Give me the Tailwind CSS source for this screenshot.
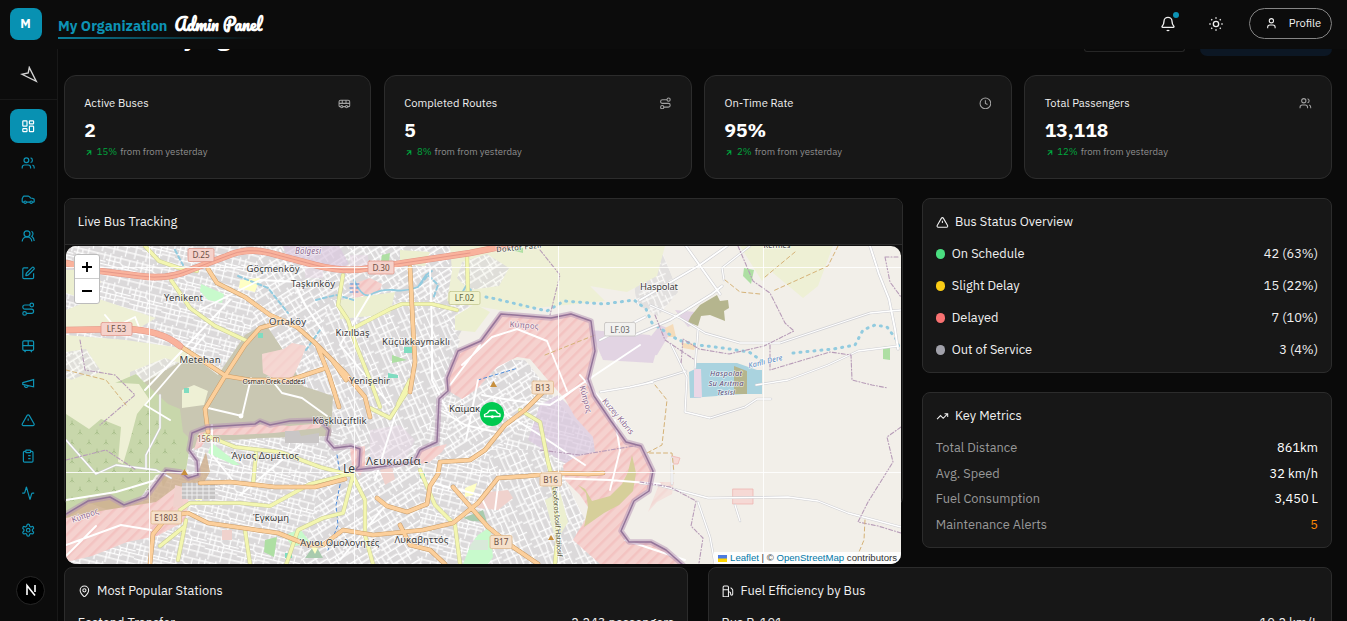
<!DOCTYPE html>
<html lang="en">
<head>
<meta charset="utf-8">
<title>Admin Panel</title>
<script src="https://cdn.jsdelivr.net/npm/@tailwindcss/browser@4"></script>
</head>
<body class="h-[621px] w-[1347px] overflow-hidden bg-[#0a0a0a] font-['IBM_Plex_Sans',Roboto,sans-serif] text-[12.8px] text-[#f0f0f0]">
<svg class="hidden">
  <symbol id="dash" viewBox="0 0 24 24"><rect x="3" y="3" width="7" height="9" rx="1"/><rect x="14" y="3" width="7" height="5" rx="1"/><rect x="14" y="12" width="7" height="9" rx="1"/><rect x="3" y="16" width="7" height="5" rx="1"/></symbol>
  <symbol id="users" viewBox="0 0 24 24"><path d="M16 21v-2a4 4 0 0 0-4-4H6a4 4 0 0 0-4 4v2M22 21v-2a4 4 0 0 0-3-3.87M16 3.13a4 4 0 0 1 0 7.75"/><circle cx="9" cy="7" r="4"/></symbol>
  <symbol id="car" viewBox="0 0 24 24"><path d="M19 17h2c.6 0 1-.4 1-1v-3c0-.9-.7-1.700-1.500-1.900C18.700 10.600 16 10 16 10s-1.300-1.400-2.200-2.300c-.5-.4-1.100-.7-1.800-.7H5c-.6 0-1.100.4-1.400.9l-1.400 2.900A3.700 3.700 0 0 0 2 12v4c0 .6.4 1 1 1h2M9 17h6"/><circle cx="7" cy="17" r="2"/><circle cx="17" cy="17" r="2"/></symbol>
  <symbol id="usersr" viewBox="0 0 24 24"><path d="M18 21a8 8 0 0 0-16 0M22 20c0-3.370-2-6.500-4-8a5 5 0 0 0-.45-8.300"/><circle cx="10" cy="8" r="5"/></symbol>
  <symbol id="pen" viewBox="0 0 24 24"><path d="M12 3H5a2 2 0 0 0-2 2v14a2 2 0 0 0 2 2h14a2 2 0 0 0 2-2v-7M18.375 2.625a1 1 0 0 1 3 3l-9.013 9.014a2 2 0 0 1-.853.505l-2.873.84a.5.5 0 0 1-.62-.62l.84-2.873a2 2 0 0 1 .506-.852z"/></symbol>
  <symbol id="route" viewBox="0 0 24 24"><circle cx="6" cy="19" r="3"/><path d="M9 19h8.500a3.500 3.500 0 0 0 0-7h-11a3.500 3.500 0 0 1 0-7H15"/><circle cx="18" cy="5" r="3"/></symbol>
  <symbol id="tram" viewBox="0 0 24 24"><rect x="3" y="3" width="18" height="16" rx="2"/><path d="M3 11h18M12 3v8M8 19l-2 3M16 19l2 3M8 15h.01M16 15h.01"/></symbol>
  <symbol id="mega" viewBox="0 0 24 24"><path d="m3 11 18-5v12L3 14v-3zM11.600 16.800a3 3 0 1 1-5.800-1.600"/></symbol>
  <symbol id="alert" viewBox="0 0 24 24"><path d="m21.730 18-8-14a2 2 0 0 0-3.480 0l-8 14A2 2 0 0 0 4 21h16a2 2 0 0 0 1.730-3M12 9v4M12 17h.01"/></symbol>
  <symbol id="clip" viewBox="0 0 24 24"><rect x="8" y="2" width="8" height="4" rx="1"/><path d="M16 4h2a2 2 0 0 1 2 2v14a2 2 0 0 1-2 2H6a2 2 0 0 1-2-2V6a2 2 0 0 1 2-2h2M12 11h4M12 16h4M8 11h.01M8 16h.01"/></symbol>
  <symbol id="act" viewBox="0 0 24 24"><path d="M22 12h-2.480a2 2 0 0 0-1.930 1.460l-2.350 8.360a.25.25 0 0 1-.48 0L9.240 2.180a.25.25 0 0 0-.48 0l-2.350 8.360A2 2 0 0 1 4.490 12H2"/></symbol>
  <symbol id="gear" viewBox="0 0 24 24"><path d="M12.220 2h-.44a2 2 0 0 0-2 2v.18a2 2 0 0 1-1 1.730l-.43.25a2 2 0 0 1-2 0l-.15-.08a2 2 0 0 0-2.730.73l-.22.38a2 2 0 0 0 .73 2.730l.15.1a2 2 0 0 1 1 1.720v.51a2 2 0 0 1-1 1.740l-.15.09a2 2 0 0 0-.73 2.730l.22.38a2 2 0 0 0 2.730.73l.15-.08a2 2 0 0 1 2 0l.43.25a2 2 0 0 1 1 1.730V20a2 2 0 0 0 2 2h.44a2 2 0 0 0 2-2v-.18a2 2 0 0 1 1-1.730l.43-.25a2 2 0 0 1 2 0l.15.08a2 2 0 0 0 2.730-.73l.22-.39a2 2 0 0 0-.73-2.730l-.15-.08a2 2 0 0 1-1-1.740v-.5a2 2 0 0 1 1-1.740l.15-.09a2 2 0 0 0 .73-2.730l-.22-.38a2 2 0 0 0-2.730-.73l-.15.08a2 2 0 0 1-2 0l-.43-.25a2 2 0 0 1-1-1.730V4a2 2 0 0 0-2-2z"/><circle cx="12" cy="12" r="3"/></symbol>
  <symbol id="bus" viewBox="0 0 24 24"><path d="M8 6v6M15 6v6M2 12h20M18 18h2.500a1.500 1.500 0 0 0 1.500-1.500V9a3 3 0 0 0-3-3H5a3 3 0 0 0-3 3v7.500A1.500 1.500 0 0 0 3.500 18H5M9 18h5"/><circle cx="7" cy="18" r="2"/><circle cx="16" cy="18" r="2"/></symbol>
  <symbol id="clock" viewBox="0 0 24 24"><circle cx="12" cy="12" r="10"/><path d="M12 6v6l4 2"/></symbol>
  <symbol id="bell" viewBox="0 0 24 24"><path d="M10.300 21a1.940 1.940 0 0 0 3.400 0M3.260 15.330A1 1 0 0 0 4 17h16a1 1 0 0 0 .74-1.670C19.410 13.960 18 12.500 18 8A6 6 0 0 0 6 8c0 4.500-1.410 5.960-2.740 7.330"/></symbol>
  <symbol id="sun" viewBox="0 0 24 24"><circle cx="12" cy="12" r="4"/><path d="M12 2v2M12 20v2M4.930 4.930l1.410 1.410M17.660 17.660l1.410 1.410M2 12h2M20 12h2M6.340 17.660l-1.410 1.410M19.070 4.930l-1.410 1.410"/></symbol>
  <symbol id="user" viewBox="0 0 24 24"><path d="M19 21v-2a4 4 0 0 0-4-4H9a4 4 0 0 0-4 4v2"/><circle cx="12" cy="7" r="4"/></symbol>
  <symbol id="up" viewBox="0 0 24 24"><path d="M7 7h10v10M7 17 17 7"/></symbol>
  <symbol id="trend" viewBox="0 0 24 24"><path d="m22 7-8.500 8.500-5-5L2 17M16 7h6v6"/></symbol>
  <symbol id="pin" viewBox="0 0 24 24"><path d="M20 10c0 4.990-5.540 10.190-7.400 11.800a1 1 0 0 1-1.200 0C9.540 20.190 4 14.990 4 10a8 8 0 0 1 16 0"/><circle cx="12" cy="10" r="3"/></symbol>
  <symbol id="fuel" viewBox="0 0 24 24"><path d="M3 22h12M4 9h10M14 22V4a2 2 0 0 0-2-2H6a2 2 0 0 0-2 2v18M14 13h2a2 2 0 0 1 2 2v2a2 2 0 0 0 4 0V9.830a2 2 0 0 0-.59-1.420L18 5"/></symbol>
</svg>

<div class="flex h-full">
  <aside class="flex w-[58px] shrink-0 flex-col border-r border-[#191919] bg-[#0c0c0c] fill-none stroke-[#0d93b5] stroke-2">
    <div class="flex h-[100px] flex-col border-b border-[#191919]">
      <div class="mt-2 ml-[10px] flex size-8 items-center justify-center rounded-lg bg-[#0891b2] pr-px text-[12.8px] font-bold text-white">M</div>
      <svg class="mt-[26px] ml-5 size-[18px] stroke-[#d4d4d4] stroke-[1.4]" viewBox="0 0 18 18"><path d="M9.300 1.500 16.200 15.300 2 8.300 8.200 7z"/></svg>
    </div>
    <nav class="ml-[10px] flex w-[37px] flex-col gap-[2.730px] pt-[9px]">
      <div class="flex h-[34px] items-center justify-center rounded-lg bg-[#0891b2] stroke-white pr-px"><svg class="size-[14.400px]"><use href="#dash"/></svg></div>
      <div class="flex h-[34px] items-center justify-center pr-px"><svg class="size-[14.400px]"><use href="#users"/></svg></div>
      <div class="flex h-[34px] items-center justify-center pr-px"><svg class="size-[14.400px]"><use href="#car"/></svg></div>
      <div class="flex h-[34px] items-center justify-center pr-px"><svg class="size-[14.400px]"><use href="#usersr"/></svg></div>
      <div class="flex h-[34px] items-center justify-center pr-px"><svg class="size-[14.400px]"><use href="#pen"/></svg></div>
      <div class="flex h-[34px] items-center justify-center pr-px"><svg class="size-[14.400px]"><use href="#route"/></svg></div>
      <div class="flex h-[34px] items-center justify-center pr-px"><svg class="size-[14.400px]"><use href="#tram"/></svg></div>
      <div class="flex h-[34px] items-center justify-center pr-px"><svg class="size-[14.400px]"><use href="#mega"/></svg></div>
      <div class="flex h-[34px] items-center justify-center pr-px"><svg class="size-[14.400px]"><use href="#alert"/></svg></div>
      <div class="flex h-[34px] items-center justify-center pr-px"><svg class="size-[14.400px]"><use href="#clip"/></svg></div>
      <div class="flex h-[34px] items-center justify-center pr-px"><svg class="size-[14.400px]"><use href="#act"/></svg></div>
      <div class="flex h-[34px] items-center justify-center pr-px"><svg class="size-[14.400px]"><use href="#gear"/></svg></div>
    </nav>
    <div class="mt-[29px] ml-[16px] flex size-[29px] items-center justify-center rounded-full border border-[#272727] bg-black">
      <svg class="size-[14px] stroke-white stroke-[1.600]" viewBox="0 0 14 14"><path d="M3 12V2.500l8 10M11 2v7"/></svg>
    </div>
  </aside>

  <div class="flex min-w-0 flex-1 flex-col">
    <header class="-ml-px flex h-[49px] shrink-0 justify-between bg-[#0c0c0c] pr-[15px]">
      <div class="mt-[11px] ml-px h-[28px] w-[250px]">
        <div class="flex h-[26px] items-center gap-[7px] whitespace-nowrap">
          <span class="mt-1 text-[14.400px] font-bold text-[#0d93b5]">My Organization</span>
          <span class="text-[16px] leading-[26px] font-bold text-white font-['Pacifico','Lobster','Liberation_Serif',serif]">Admin Panel</span>
        </div>
        <div class="h-[2px] w-[200px] bg-gradient-to-r from-[#0b7e9b] to-transparent"></div>
      </div>
      <div class="flex fill-none stroke-[#f0f0f0] stroke-2">
        <div class="relative mt-4 mr-[32px] size-4"><svg class="size-4"><use href="#bell"/></svg><i class="absolute -top-1 left-[13px] size-[6px] rounded-full bg-[#0d93b5]"></i></div>
        <svg class="mt-4 mr-[25px] size-4"><use href="#sun"/></svg>
        <div class="mt-2 flex h-[31px] w-[83px] items-center rounded-full border border-[#858585] pl-[15px] text-[11.200px]"><svg class="mr-[11px] size-[12.800px]"><use href="#user"/></svg>Profile</div>
      </div>
    </header>

    <main class="flex flex-1 flex-col pr-[15.200px] pl-[6px]">
      <div class="flex h-[26px] items-start justify-between overflow-hidden">
        <div class="-mt-[21px] ml-[119px] flex h-[26px] gap-[22px] text-[23px] leading-[20px] font-bold text-white"><span>y</span><span>g</span></div>
        <div class="flex gap-[15px]">
          <div class="h-[3px] w-[101px] rounded-b-lg border border-t-0 border-[#262626]"></div>
          <div class="h-[7px] w-[132px] rounded-b-lg bg-[#0c1724]"></div>
        </div>
      </div>

      <section class="grid h-[104px] grid-cols-4 gap-[12.800px]">
        <div class="rounded-xl border border-[#2c2c2c] bg-[#171717] px-[19.200px] pt-[18px]">
          <div class="flex h-[18px] items-center justify-between text-[11.200px]"><span>Active Buses</span><svg class="size-[12.800px] fill-none stroke-[#a1a1a1] stroke-2"><use href="#bus"/></svg></div>
          <div class="mt-[5px] text-[19.200px] leading-[26px] font-bold text-white">2</div>
          <div class="mt-[3px] flex h-[13px] items-center text-[9.600px] text-[#8d8d8d]"><svg class="mr-[3px] size-[9.600px] fill-none stroke-[#00a63e] stroke-[2.600]"><use href="#up"/></svg><span class="mr-[3px] text-[#00a63e]">15%</span>from from yesterday</div>
        </div>
        <div class="rounded-xl border border-[#2c2c2c] bg-[#171717] px-[19.200px] pt-[18px]">
          <div class="flex h-[18px] items-center justify-between text-[11.200px]"><span>Completed Routes</span><svg class="size-[12.800px] fill-none stroke-[#a1a1a1] stroke-2"><use href="#route"/></svg></div>
          <div class="mt-[5px] text-[19.200px] leading-[26px] font-bold text-white">5</div>
          <div class="mt-[3px] flex h-[13px] items-center text-[9.600px] text-[#8d8d8d]"><svg class="mr-[3px] size-[9.600px] fill-none stroke-[#00a63e] stroke-[2.600]"><use href="#up"/></svg><span class="mr-[3px] text-[#00a63e]">8%</span>from from yesterday</div>
        </div>
        <div class="rounded-xl border border-[#2c2c2c] bg-[#171717] px-[19.200px] pt-[18px]">
          <div class="flex h-[18px] items-center justify-between text-[11.200px]"><span>On-Time Rate</span><svg class="size-[12.800px] fill-none stroke-[#a1a1a1] stroke-2"><use href="#clock"/></svg></div>
          <div class="mt-[5px] text-[19.200px] leading-[26px] font-bold text-white">95%</div>
          <div class="mt-[3px] flex h-[13px] items-center text-[9.600px] text-[#8d8d8d]"><svg class="mr-[3px] size-[9.600px] fill-none stroke-[#00a63e] stroke-[2.600]"><use href="#up"/></svg><span class="mr-[3px] text-[#00a63e]">2%</span>from from yesterday</div>
        </div>
        <div class="rounded-xl border border-[#2c2c2c] bg-[#171717] px-[19.200px] pt-[18px]">
          <div class="flex h-[18px] items-center justify-between text-[11.200px]"><span>Total Passengers</span><svg class="size-[12.800px] fill-none stroke-[#a1a1a1] stroke-2"><use href="#users"/></svg></div>
          <div class="mt-[5px] text-[19.200px] leading-[26px] font-bold text-white">13,118</div>
          <div class="mt-[3px] flex h-[13px] items-center text-[9.600px] text-[#8d8d8d]"><svg class="mr-[3px] size-[9.600px] fill-none stroke-[#00a63e] stroke-[2.600]"><use href="#up"/></svg><span class="mr-[3px] text-[#00a63e]">12%</span>from from yesterday</div>
        </div>
      </section>

      <section class="mt-[19px] flex h-[350px] gap-[19px]">
        <div class="h-[308px] w-[839px] shrink-0 rounded-lg border border-[#2c2c2c] bg-[#101010]">
          <div class="flex h-[46px] items-center rounded-t-lg border-b border-[#2c2c2c] bg-[#171717] px-[12.800px]">Live Bus Tracking</div>
          <div class="relative z-10 mt-px ml-px h-[318px] w-[835px] overflow-hidden rounded-[10px]">
            <svg class="block h-[318px] w-[835px]" viewBox="66 246 835 318" fill="none" stroke-linejoin="round" stroke-linecap="round">
              <defs>
                <pattern id="st1" width="46" height="38" patternUnits="userSpaceOnUse" patternTransform="rotate(14) scale(.72)"><path fill="#dbd9da" d="M0 0h46v38H0z"/><path stroke="#fff" stroke-width="1.700" d="M0 4h46M0 10h20l4 3h22M0 17h46M0 24h28M28 22h18M0 31h46M5 0v17M12 4v27M20 0v10M25 13v25M33 4v13M38 17v21M43 0v10M8 24v14M18 17v7"/></pattern>
                <pattern id="st2" width="42" height="44" patternUnits="userSpaceOnUse" patternTransform="rotate(-32) scale(.75)"><path fill="#dbd9da" d="M0 0h42v44H0z"/><path stroke="#fff" stroke-width="1.700" d="M0 5h42M0 12h25M25 10h17M0 19h42M0 27h15l5 3h22M0 36h42M4 5v31M11 0v19M18 19v25M24 5v14M31 12v24M37 0v12M9 36v8M27 30v14M38 19v17"/></pattern>
                <pattern id="st3" width="50" height="46" patternUnits="userSpaceOnUse" patternTransform="rotate(66) scale(.72)"><path fill="#dbd9da" d="M0 0h50v46H0z"/><path stroke="#fff" stroke-width="1.800" d="M0 6h50M0 13h30M30 16h20M0 22h50M0 29q25 5 50 0M0 38h50M7 0v22M15 13v25M23 0v13M30 6v24M40 0v29M46 22v24M10 29v17M35 31v15"/></pattern>
                <pattern id="red" width="8" height="8" patternUnits="userSpaceOnUse" patternTransform="rotate(45)"><path fill="#f5d2cf" d="M0 0h8v8H0z"/><path fill="#f3c3c1" d="M0 0h2.500v8H0z"/></pattern>
                <pattern id="tree" width="17" height="19" patternUnits="userSpaceOnUse"><path stroke="#a6bc88" stroke-width=".8" d="M4 7v-4M2 7l2-2 2 2M12 16v-4M10 16l2-2 2 2"/></pattern>
              </defs>
              <path fill="#f2efe9" d="M66 246h835v318H66z"/>
              <!-- districts -->
              <path fill="url(#st1)" d="M66 246h210l20 60-40 70-80-20-110-15z"/>
              <path fill="url(#st2)" d="M260 246h200l10 70-40 70-2 70-98-5-30-60-50-50z"/>
              <path fill="url(#st3)" d="M330 300h100l30 40-20 60-20 55-90-20-25-50z"/>
              <path fill="url(#st1)" d="M190 432h150l20 50v82H66l50-60 70-30z"/>
              <path fill="url(#st2)" d="M330 445h120l20 119H300z"/>
              <path fill="url(#st1)" d="M440 400l40-40 45 0 40 50 35 40-45 30 20 84H420V450z"/>
              <path fill="url(#st3)" d="M490 450l60 0 25 50 10 64H480zM575 500l25 50 60 14h-80z"/>
              <path fill="url(#st2)" d="M460 385l40-30 30 10 10 50-70 50-30-10z"/>
              <path fill="url(#st3)" d="M632 252l28-6 18 46-20 24-22-12z" opacity=".7"/>
              <!-- farmland, scrub and woods -->
              <path fill="#eef0d5" d="M66 335l60 5 55 8 35 32-15 40-70 20-65-20zM450 246h145l-10 35 20 20-100 10-58-10 5-30zM570 246h95l-8 30-30 16-75-12zM770 246h63l-15 40-15 12-30-25zM740 246h40l-3 20-15 15zM66 310l30-12 60 20-20 12-70-3z"/>
              <path fill="#ecefd0" d="M66 270l25 0 10 12-20 16-15-5zM340 300l55-8-5 22-50 5zM455 316l20-12 15 8-15 20-20-2zM545 500l15-8 8 30-12 20zM400 250l30 2-5 14-25-2z"/>
              <path fill="url(#st2)" d="M66 352l20-3 15 22-20 12-15-5zM130 372l35-14 18 6-28 27-25-5zM462 262l25-8 22 14-10 18-30 4-12-12z" opacity=".8"/>
              <path fill="#c9c7b2" d="M140 385l38-22 20-3 20 15 27-40 20-12 18 27 20 36 30 10-2 40-68 2-60 4-23 15-17 30-10-50z"/>
              <path fill="#c8d7ab" d="M66 385l20-6 15 10 35-15 10 10 22 20 12 5 3 23 8 8-5 30-30 5-15 22-24 16-28-10-23 16z"/>
              <path fill="url(#tree)" d="M66 410h90l25 30-2 30-30 20-83 15z"/>
              <path fill="#eef0d5" d="M66 382l20-8 18 8 35 2 10 15-12 15-8 30-6 20-5-2 3-35-20-8-12 10-23-15zM182 390l12-5 14 6-4 14-22 3z"/>
              <path fill="#cfb08f" d="M66 515l22-14 22-3 14 8 22-9 18-26 22 4 10 2 10-25 4 20-14 24-35 8-35 20-60 6z" opacity=".85"/>
              <path fill="#f5d9d4" d="M262 354l22-5 8-6 14 3-5 14-12 25-18-8-8-4z"/><path fill="url(#red)" opacity=".35" d="M262 354l22-5 8-6 14 3-5 14-12 25-18-8-8-4z"/>
              <path fill="url(#red)" d="M66 518l40-8 50-8 20-15 14 4-5 30-28 15-30 6-35 14-26 6z"/>
              <path fill="url(#red)" d="M194 450l5-17 25-6 45-3 20 2 35-3-5 5-45 5-40 2-25 0-8 12z"/>
              <path fill="url(#red)" d="M350 448l15-2 0 20-5 10-8-10zM412 462l10-12 25-6-5 8-15 12zM350 285l20-7 12 6-3 8-25 6z"/>
              <path fill="#c8facc" d="M201 284l23 10-2 9-14-3-8-9zM212 443l28 22-6 0-26-12zM478 535l12-8 3 30-5 7h-25l8-20zM285 535l15-6 10 13-18 5zM455 375h15v8h-13z"/>
              <path fill="#aedfa3" d="M265 540l12-3-3 20-10-5zM382 255l8-2-1 8h-8zM744 268l10 2-3 14-8-8zM511 250l12-2v5zM883 347l7-1 0 14-7-1zM392 355l15 5-15 3z"/>
              <path fill="#7fdcc0" d="M258 333h5v5h-5zM404 347h8v6h-8zM388 373l10 2v3h-10zM184 388h5v5h-5zM285 553h7v5h-7zM310 436h5v4h-5zM420 474h5v4h-5z"/>
              <path fill="#a9cbae" d="M463 518l20-8 4 12-15-1zM305 558l10-14 8 14z"/>
              <path fill="#dcc9e0" opacity=".7" d="M283 246h56l10 18-12 5-50-12zM590 330l60 5 8 10-5 18-50-3zM540 405l18-10 40 40-5 20-25 10-40-25zM600 355l40-5 20-25 12 5-15 25-45 5zM675 310l20 2 3 10-10 5zM690 378l8-2 3 22h-9z"/>
              <path fill="#ffffc5" d="M240 280l20-2-5 14-16-4zM465 488l12-5-4 12-8 2zM310 545l8 3-3 6zM195 495h7v5h-7z"/>
              <path fill="#e8d8e6" d="M305 264h18v14h-18zM350 255h18v15h-18zM470 540h18v10h-18zM370 430l30-5 15 15-10 20-35 2z" opacity=".5"/>
              <path fill="#f0d2cd" d="M380 470l12-3 3 12-10 6zM478 502l10-10 20-2 5 8-15 12-20-2zM222 530h10v10h-10zM175 485l8 2 0 18-10 3z"/>
              <path fill="#f5dcba" d="M665 328l8-4 3 13-8 0zM681 343l15 1-2 6-11-2z"/>
              <path fill="#b5b58e" d="M700 305l17-10 3 6 8-1 1 8-5 3 1 10-15-6-9 1-3 10-10-4 3-6z"/>
              <path fill="#f6d9d5" stroke="#eeb0ae" stroke-width=".7" d="M733 489h20v15h-20zM672 456l8 2-2 6-5 0z"/>
              <path fill="#c9c6c6" d="M285 431h14l2 5 18-3v10h-34z"/>
              <path fill="#c5c3c3" d="M182 483h33v16h-33z"/><path stroke="#eee" d="M182 487h33M182 491h33M182 495h33M187 483v16M192 483v16M197 483v16M203 483v16M209 483v16"/>
              <!-- buffer zone -->
              <path fill="url(#red)" d="M447 390l-1-13 11-27 23-10 20-27 50 4 20-4 20 7 4 30-7 28 6 17 17 25 15 21 15 4 12 25-4 20-15 10-13 30 8 11 22 0 15 8 17 15H600l-27-24 12-20 5-10-10-15-15-15-2-15 12-8 20-5-2-15-18-20-10-18-18-20-17-20-13-2-20 10-20 22-15 10z"/>
              <path fill="url(#red)" opacity=".5" d="M660 482l14 0-2 12-15 8-9 10z"/>
              <path fill="#d6cf9a" d="M632 455l4 18-3 18-14 14-15 8-20 14 4-20-2-14-8-8 7 4 7 12 18-5 12-12 6-12z"/>
              <!-- streams -->
              <path stroke="#92cbdf" stroke-width="1.800" d="M354 280q8 18 16 15 10-6 24-5 12 2 24-3l8-12 6-4M458 300l8-14 5 4-4 8"/>
              <path stroke="#92cbdf" stroke-width="2" stroke-dasharray="4 3" d="M316 300l20-5 18 5M420 285l8-10 10 10-5 14M175 250l8 15M238 276l30 12 20 25M320 330l-14 20"/>
              <path stroke="#92cbdf" stroke-width="3" stroke-dasharray="1 6" d="M486 297l10 2 25 6 26 6 17-10 40 3 30-4 12 9 6 14 26 17 20 5 25 3 26 4 13 9M793 353l40-4 22-4 8-15 12-5 12 2 9 12 3 8"/>
              <path stroke="#4b8ad9" stroke-dasharray="3 3" d="M350 284h9M350 288h8M350 292h8M337 455l4 25-5 25 2 20-10 25M478 380l40-12"/>
              <path fill="#aad3df" d="M695 363l42 0 20 7h5v24h-18l-54 4-1-26 6-3z"/><path fill="#b5b58e" d="M734 366l13 5v23h-13z"/><path fill="#ead7e6" d="M694 369l7 0 1 28h-8z"/>
              <!-- minor roads -->
              <g stroke="#cfcfd3" stroke-width="3"><path id="mr" d="M635 335l35-15 42-26 10-8M686 246l34 48M640 300l60-35 27-19M600 340l45-23M870 246l9 28 10 25 6 30 3 20"/></g>
              <g stroke="#cfcfd3" stroke-width="2.400"><path id="mq" d="M750 246l-28 22 2 12M650 305l30 13 25 15 35 10 40 0 30-10 60-20 31-3M898 346l-40 5-30 14-40 15-32 5M698 330l-3 38M671 344l16 33-2 35 25 6 35-11 12-8h14M640 385l30-9 16-5M600 392l30-5 23-5M640 483l18 2 50 13 80-1 30 4 30 12 53 14M698 502l12 35 5 27M735 505l5 16M672 458v26M66 440l30 34 20-9 40 5 15 8M160 395v33l-14 27v14"/></g>
              <use href="#mq" stroke="#fff" stroke-width="1.300"/>
              <g stroke="#fff" stroke-width="1.900"><use href="#mr"/><path d="M208 408l34 8 9-38M270 378l12 15 20 5 25 18M212 425v30l23 28M105 315l10 12 20-10 8 20M205 335l-60 70 25 15M230 300l-85 90M200 310l60-30 40 2M280 250l25 55 20 30M370 295l-30 50 50 60M430 270l2 60 0 50 15 30M480 345l-30 40M478 380l-12 60M500 410l40 25 45 30M640 345l-60 40-30 20-40-5-28-5M440 410l25 15 35 8M550 478l60 2 50 4M610 410l-30-35M615 420l5 30-10 40M66 500l50-8 40-12M66 545l55-20 30 5M66 556l30-30M300 445l-60 50M390 500l-50 60M400 400l-25 80M420 480l60 15 10 20M500 470l-5 40M625 540l60 20M462 365l30-28 25-8 30 12 8 20 12 30M560 400l20-15"/><circle cx="241" cy="416" r="1.500" fill="#fff"/></g>
              <g stroke="#b79cb8" stroke-width="1.100" stroke-dasharray="4 2 1 2"><path d="M738 246l15 35 17 12 15 30 9 8-30 15-35 8-30-5-16-10-2 25M655 315l10 25 30 20M770 345v25l60-18 21 3 1 25 20 5 16 3M901 427l-14 10 6 25-25 40-10 20 20 4 23 7M640 482l30 5 26 14-5 25 12 12-4 25M885 257h15M885 257l5 25 11 15M66 460l40-10 30 20M80 340l5 30 30 5 20 20-35 30M540 250l20 25-10 40M540 450l40 5 60-10"/></g>
              <g stroke="#d5b277" stroke-dasharray="4 3"><path d="M655 385l12 15-5 45-15 8 25 0 2 20M795 252l-30 25M838 246l-10 20-55 25M725 280l15 12 20 2M66 370l40 10 20 25M545 355l50-20M865 520l-1 20-10 24"/></g>
              <!-- secondary roads -->
              <g stroke="#c9cb98" stroke-width="4.200"><path id="yr" d="M145 246l14 15 20 7 18 3M171 280l19 28 25 18 32 15M343 275l-5 30 10 15 8 25 16 40 8 22M350 330l40-21 12-5h30l25 6M467 256l1 40M205 435l30 12 45 5 40 15 30 8M256 453l-3 32M180 510l10-7 50 0 30 3 40-22 40-10M355 468l-12 45-20 5-25 12-12 35M520 410l20 12 8 40 5 20 5 50-3 32M160 546l25-20M178 560l8-40M245 530l5 34M350 470l15 30 0 35 8 29M420 470l15 35 20 20 5 39M370 408l20 10 18-28M410 380l-12 24"/></g>
              <use href="#yr" stroke="#f3f6b0" stroke-width="3.200"/>
              <g stroke="#c99b66" stroke-width="4.600"><path id="or" d="M208 269l9 14 28 14 25 18 27 12 17 15 18 18 14 20M180 346l46 30 24 4 40 0 33-11M225 376l20-31 15-17 25-7M225 376l-20 33 3 23M410 267l3 60 2 35-5 30M317 345l12 30 10 32M315 343l30 30 20 24 5 20M200 483l30-1 45 5 40 0 30-8M150 564l3-30 15-18 20-3 20 10 35 5 35 5 30 12h15l20-15 30 5 50-5 30-7 25-20 20-25 30-2 30-3 30 1 15-1M440 462l30-2 15-10 20-25 20-15 20-20M440 462l-2 12-8 12-3 18-20 8-20-6-10-8M453 487l35 40 25 20 25 17M400 525l10 20 20 5 15 14"/></g>
              <use href="#or" stroke="#fccf9b" stroke-width="3.600"/>
              <g stroke="#e29687" stroke-width="6.600"><path id="tr" d="M66 263l34 8 40 5q28 4 50-6l37-14q20-9 43-3l45 12q30 8 55 3l100-15 50-10M66 330l60-1q35 1 54 17"/></g>
              <use href="#tr" stroke="#f9b29c" stroke-width="5.600"/>
              <path stroke="#d9877c" stroke-width=".6" d="M100 271l40 5q28 4 50-6l37-14q20-9 43-3l45 12q30 8 55 3l100-15"/>
              <!-- border -->
              <g stroke="#b898b6" stroke-opacity=".55" stroke-width="5.500"><path id="bd" d="M66 514l22-13 22-4 14 8 22-8 20-27 15 2 7 6 10-3-1-14-8-11 3-17 15-6 48-3 5-3 10 4 20-4 30-1 9 10-2 10 7 8 17-2 9 3-1 17-4 4 17-2 42-6 6-12 17-8 2-43 9-8-1-13 11-27 23-10 20-27 50 4 20-4 20 7 4 30-7 28 6 17 17 25 15 21 15 4 12 25-4 20-15 10-13 30 8 11 22 0 15 8 17 15"/></g>
              <use href="#bd" stroke="#94759a" stroke-width="1.500"/>
              <!-- tile seams -->
              <path stroke="#fff" stroke-opacity=".85" d="M149.500 246v318M354.500 246v318M558.500 246v318M763.500 246v318M66 267.500h835M66 472.500h835"/>
              <path fill="#c78f3d" d="M181 475l3.500-6 3.500 6zM490 387l3.500-6 3.500 6zM548 540l3-5 3 5z"/>
              <!-- road shields -->
              <g stroke-width=".8"><g fill="#f5d2cb" stroke="#e2988c"><rect x="188" y="248.500" width="26" height="13" rx="1.500"/><rect x="368" y="261" width="26" height="13" rx="1.500"/><rect x="101" y="322.500" width="31" height="13" rx="1.500"/></g><rect x="449" y="291.500" width="31" height="13" rx="1.500" fill="#f0f3cf" stroke="#c4c890"/><rect x="604.500" y="322.500" width="31" height="13.500" rx="1.500" fill="#f2f1ef" stroke="#c5c3c0"/><g fill="#f6e0ca" stroke="#dfb98e"><rect x="532" y="381" width="21.500" height="13" rx="1.500"/><rect x="540" y="473" width="21.500" height="13" rx="1.500"/><rect x="490" y="535.500" width="22" height="13" rx="1.500"/><rect x="151" y="511" width="30.500" height="13" rx="1.500"/></g></g>
              <g class="font-['Noto_Sans']" font-size="8.200" text-anchor="middle" fill="#6c4f43"><text x="201" y="258">D.25</text><text x="381" y="270.500">D.30</text><text x="116.500" y="332">LF.53</text><text x="464.500" y="301" fill="#60653d">LF.02</text><text x="620" y="332.500" fill="#666">LF.03</text><text x="542.500" y="390.500">B13</text><text x="550.500" y="482.500">B16</text><text x="501" y="545">B17</text><text x="166" y="520.500">E1803</text></g>
              <!-- place names -->
              <g class="font-['Noto_Sans']" font-size="9.500" text-anchor="middle" fill="#3b3b3b" stroke="#fff" stroke-opacity=".6" stroke-width="1.600" paint-order="stroke">
                <text x="273" y="272" textLength="53">Göçmenköy</text><text x="313" y="287" textLength="44">Taşkınköy</text><text x="183.500" y="300.500" textLength="39">Yenikent</text><text x="287.500" y="325" textLength="37">Ortaköy</text><text x="352.500" y="335.500" textLength="34">Kızılbaş</text><text x="416" y="345" textLength="68">Küçükkaymaklı</text><text x="369.500" y="384" textLength="41">Yenişehir</text><text x="200" y="362.500" textLength="41">Metehan</text><text x="339.500" y="423.500" textLength="54">Köşklüçiftlik</text><text x="659" y="290" textLength="38">Haspolat</text><text x="464.500" y="412" textLength="31">Καϊμακ</text><text x="265" y="459" textLength="68">Άγιος Δομέτιος</text><text x="271" y="521" textLength="36">Έγκωμη</text><text x="339.500" y="546" textLength="80">Άγιοι Ομολογητές</text><text x="421.500" y="543" textLength="54">Λυκαβηττός</text>
                <text x="397" y="465" font-size="11.500" textLength="62">Λευκωσία -</text><text x="349" y="472.500" font-size="12" textLength="12">Le</text>
                <text x="208.500" y="442" font-size="8" fill="#8b6750" textLength="23">156 m</text>
                <text x="274" y="384" font-size="7" fill="#2d251b" textLength="63">Osman Örek Caddesi</text>
                <text x="519" y="250" font-size="7.500" transform="rotate(-6 519 250)" textLength="45">Doktor Fazıl</text><text x="777" y="248" font-size="7.500">Kermes</text>
                <g fill="#8d6a92" font-size="8"><text x="308" y="254" font-style="italic" textLength="26">Bölgesi</text><text x="524" y="328" transform="rotate(4 524 328)" textLength="29">Κύπρος</text><text x="86" y="518" transform="rotate(-20 86 518)" textLength="28">Κύπρος</text><text x="583" y="400" transform="rotate(75 583 400)" textLength="28">Κύπρος</text><text x="616" y="418" transform="rotate(50 616 418)" textLength="44">Kuzey Kıbrıs</text></g>
                <g font-size="7.600" font-style="italic" fill="#5d4b78"><text x="726" y="376" textLength="32">Haspolat</text><text x="726" y="385.500" textLength="35">Su Arıtma</text><text x="726" y="395" textLength="18">Tesisi</text></g>
                <text x="766" y="364" font-size="7.500" font-style="italic" fill="#5c8bc4" transform="rotate(-14 766 364)" textLength="35">Kanlı Dere</text>
                <text x="555" y="522" font-size="7" fill="#4b4b2c" transform="rotate(86 555 522)" textLength="70">Leoforos Iosif Hatziiosif</text>
              </g>
              <!-- bus marker -->
              <circle cx="492" cy="414" r="12" fill="#00c950"/><path stroke="#fff" stroke-width="1.300" d="M489 416.500h-4.500v-2l3-1.500 2-2.500h6l2 2.500 2.500 1v2.500h-4.500M489 416.500h7"/><circle cx="492.300" cy="416.700" r="1.500" fill="#fff"/>
            </svg>
            <div class="absolute top-[8px] left-[8px] h-[50px] w-[26px] rounded-[3px] border border-[#bcbcbc] bg-white"><svg class="block h-[48px] w-[24px] fill-none stroke-black stroke-[1.900]" viewBox="0 0 24 48"><path d="M7 12h10M12 7v10M7 36h10"/><path stroke="#ccc" stroke-width="1" d="M0 23.500h24"/></svg></div>
            <div class="absolute right-0 bottom-0 flex h-[12px] items-center bg-white/85 pr-1 pl-1 font-['Liberation_Sans'] text-[9.600px] whitespace-pre text-[#333]"><svg class="mr-[3px] h-[7px] w-[9px]" viewBox="0 0 9 7"><path fill="#4c7be1" d="M0 0h9v4H0z"/><path fill="#ffd500" d="M0 3.500h9V7H0z"/></svg><span class="text-[#0078a8]">Leaflet</span> | © <span class="text-[#0078a8]">OpenStreetMap</span> contributors</div>
          </div>
        </div>

        <div class="flex flex-1 flex-col gap-[19px]">
          <div class="h-[175px] rounded-lg border border-[#2c2c2c] bg-[#171717] px-[12.800px] pt-[7px]">
            <div class="flex h-8 items-center gap-[6.400px]"><svg class="size-[12.800px] fill-none stroke-[#f0f0f0] stroke-2"><use href="#alert"/></svg>Bus Status Overview</div>
            <div class="flex h-8 items-center"><i class="mr-[6.400px] size-[9.600px] rounded-full bg-[#4ade80]"></i>On Schedule<span class="ml-auto">42 (63%)</span></div>
            <div class="flex h-8 items-center"><i class="mr-[6.400px] size-[9.600px] rounded-full bg-[#facc15]"></i>Slight Delay<span class="ml-auto">15 (22%)</span></div>
            <div class="flex h-8 items-center"><i class="mr-[6.400px] size-[9.600px] rounded-full bg-[#f87171]"></i>Delayed<span class="ml-auto">7 (10%)</span></div>
            <div class="flex h-8 items-center"><i class="mr-[6.400px] size-[9.600px] rounded-full bg-[#a1a1aa]"></i>Out of Service<span class="ml-auto">3 (4%)</span></div>
          </div>
          <div class="h-[156px] rounded-lg border border-[#2c2c2c] bg-[#171717] px-[12.800px] pt-[7px]">
            <div class="mb-[3px] flex h-8 items-center gap-[6.400px]"><svg class="size-[12.800px] fill-none stroke-[#f0f0f0] stroke-2"><use href="#trend"/></svg>Key Metrics</div>
            <div class="flex h-[25.600px] items-center justify-between"><span class="text-[#999]">Total Distance</span><span class="text-white">861km</span></div>
            <div class="flex h-[25.600px] items-center justify-between"><span class="text-[#999]">Avg. Speed</span><span class="text-white">32 km/h</span></div>
            <div class="flex h-[25.600px] items-center justify-between"><span class="text-[#999]">Fuel Consumption</span><span class="text-white">3,450 L</span></div>
            <div class="flex h-[25.600px] items-center justify-between"><span class="text-[#999]">Maintenance Alerts</span><span class="text-[#ff8904]">5</span></div>
          </div>
        </div>
      </section>

      <section class="mt-[19px] grid h-[54px] grid-cols-2 gap-[20px] overflow-hidden">
        <div class="h-[90px] rounded-lg border border-[#2c2c2c] bg-[#171717] px-[12.800px] pt-[7px]">
          <div class="flex h-8 items-center gap-[6.400px]"><svg class="size-[12.800px] fill-none stroke-[#f0f0f0] stroke-2"><use href="#pin"/></svg>Most Popular Stations</div>
          <div class="flex h-8 items-center justify-between"><span>Eastend Transfer</span><span>2,243 passengers</span></div>
        </div>
        <div class="h-[90px] rounded-lg border border-[#2c2c2c] bg-[#171717] px-[12.500px] pt-[7px]">
          <div class="flex h-8 items-center gap-[6.400px]"><svg class="size-[12.800px] fill-none stroke-[#f0f0f0] stroke-2"><use href="#fuel"/></svg>Fuel Efficiency by Bus</div>
          <div class="flex h-8 items-center justify-between"><span>Bus B-101</span><span>10.2 km/L</span></div>
        </div>
      </section>
    </main>
  </div>
</div>
</body>
</html>
